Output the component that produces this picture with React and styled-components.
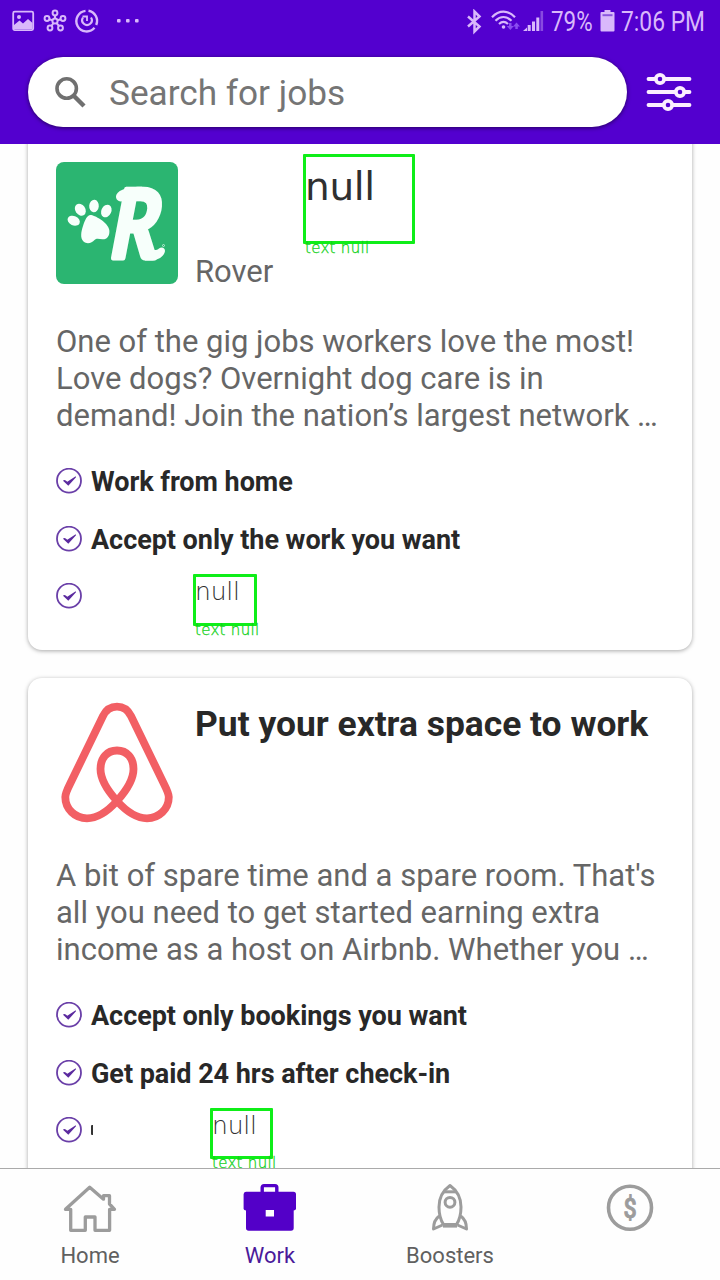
import React from 'react';
import styled, { createGlobalStyle } from 'styled-components';

const GlobalStyle = createGlobalStyle`
  * { box-sizing: border-box; }
  body { margin: 0; background: #fff; font-family: Roboto, sans-serif; }
`;

const Screen = styled.div`
  width: 720px;
  height: 1280px;
  display: flex;
  flex-direction: column;
  overflow: hidden;
  background: #fefefe;
`;

const Header = styled.header`
  height: 144px;
  flex: none;
  background: #5300cf;
`;

const StatusBar = styled.div`
  height: 44px;
  padding: 0 15px 0 12px;
  display: flex;
  align-items: center;
  justify-content: space-between;
  color: #d9b8fb;
`;

const StatusGroup = styled.div`
  display: flex;
  align-items: center;
  svg { display: block; }
`;

const StatusText = styled.span`
  width: ${(p) => p.$width}px;
  margin-left: ${(p) => p.$gap}px;
  font-size: 27px;
  line-height: 44px;
  white-space: nowrap;
  span {
    display: inline-block;
    transform: scaleX(${(p) => p.$squeeze});
    transform-origin: left;
  }
`;

const BatteryIcon = styled.svg`
  margin-left: 8px;
`;

const SearchRow = styled.div`
  padding: 13px 28px 0;
  display: flex;
  align-items: center;
  justify-content: space-between;
`;

const SearchBox = styled.div`
  width: 599px;
  height: 70px;
  border-radius: 35px;
  background: #fff;
  box-shadow: 0 1px 4px rgba(0, 0, 0, 0.55);
  display: flex;
  align-items: center;
  gap: 22px;
  padding: 2px 26px 0;
  color: #757575;
  font-size: 35.2px;
`;

const Feed = styled.main`
  flex: 1;
  min-height: 0;
  overflow: hidden;
  padding: 0 28px;
  display: flex;
  flex-direction: column;
  gap: 28px;
`;

const Card = styled.article`
  position: relative;
  flex: none;
  height: ${(p) => p.$height}px;
  margin-top: ${(p) => p.$offset || 0}px;
  padding: ${(p) => p.$top}px 28px 0;
  border-radius: 14px;
  background: #fff;
  box-shadow: 0 1px 4px rgba(0, 0, 0, 0.34);
`;

const CardHead = styled.div`
  display: flex;
  gap: 17px;
  height: 124px;
  svg { flex: none; display: block; }
`;

const Company = styled.div`
  align-self: flex-end;
  font-size: 31px;
  line-height: 36px;
  color: #666;
  margin-bottom: -4px;
`;

const Title = styled.h2`
  margin: 4px 0 0;
  font-size: 35.4px;
  line-height: 41px;
  font-weight: 700;
  color: #282828;
  white-space: nowrap;
`;

const Description = styled.p`
  margin: ${(p) => p.$top}px 0 0;
  font-size: 31px;
  line-height: 37px;
  color: #666;
  white-space: nowrap;
`;

const Perks = styled.ul`
  list-style: none;
  margin: 18px 0 0;
  padding: 0;
`;

const Perk = styled.li`
  height: 57.8px;
  display: flex;
  align-items: center;
  gap: 9px;
  font-size: 27px;
  font-weight: 700;
  color: #282828;
  white-space: nowrap;
  span { padding-top: 2px; letter-spacing: -0.04px; }
`;

const ClippedMark = styled.i`
  width: 1.5px;
  height: 10px;
  border-radius: 1px 0 0 1px;
  background: #333;
`;

const Marker = styled.div`
  position: absolute;
  left: ${(p) => p.$x}px;
  top: ${(p) => p.$y}px;
  width: ${(p) => p.$w}px;
  height: ${(p) => p.$h}px;
  border: 3px solid #0fee18;
  border-radius: 1px;
  font-family: 'DejaVu Sans', sans-serif;
  white-space: nowrap;
`;

const MarkerValue = styled.span`
  position: absolute;
  left: -1px;
  top: ${(p) => (p.$large ? 6 : 1)}px;
  font-size: ${(p) => (p.$large ? 39 : 25)}px;
  line-height: ${(p) => (p.$large ? 48 : 28)}px;
  font-weight: ${(p) => (p.$large ? 400 : 200)};
  letter-spacing: ${(p) => (p.$large ? -0.3 : -0.2)}px;
  color: #303030;
`;

const MarkerLabel = styled.span`
  position: absolute;
  left: -1px;
  top: 100%;
  margin-top: -3px;
  font-size: 15px;
  line-height: 20px;
  font-weight: 200;
  letter-spacing: 0.3px;
  color: #10d018;
  -webkit-text-stroke: 0.3px #10d018;
`;

const NavBar = styled.nav`
  flex: none;
  height: 112px;
  border-top: 1px solid #aaa;
  background: #fefefe;
  display: grid;
  grid-template-columns: repeat(4, 1fr);
`;

const NavItem = styled.div`
  display: flex;
  flex-direction: column;
  align-items: center;
  padding-top: 13px;
  gap: 8px;
  font-size: 22px;
  line-height: 28px;
  color: ${(p) => (p.$active ? '#4a1a9a' : '#606060')};
  svg { display: block; }
`;

const LeftStatus = () => (
  <svg width="130" height="26" viewBox="0 0 130 26" fill="none" stroke="currentColor">
    <rect x="1.2" y="2.7" width="20" height="18.4" rx="1.5" strokeWidth="1.8" />
    <path d="M2 20V16L7.5 11.500L11 14.500L16 10L20.500 14V20Z" fill="currentColor" stroke="none" />
    <circle cx="7" cy="8" r="2" fill="currentColor" stroke="none" />
    <g strokeWidth="2">
      <circle cx="43" cy="12" r="2.6" />
      <circle cx="43" cy="4" r="2.4" />
      <circle cx="35" cy="9.5" r="2.4" />
      <circle cx="51" cy="9.5" r="2.4" />
      <circle cx="38" cy="19" r="2.4" />
      <circle cx="48.5" cy="19" r="2.4" />
      <path d="M43 6.500V9.500M37.200 10.300L40.500 11.300M48.800 10.300L45.500 11.300M39.400 17L41.400 14.200M47 17L44.600 14.200" />
    </g>
    <path d="M73.500 1.900A10.300 10.300 0 1 0 82.500 18.800M76.500 1.700A10.300 10.300 0 0 1 84.200 16" strokeWidth="2.400" />
    <path d="M71 8.500A4.800 4.800 0 1 0 79 8.500" strokeWidth="2.200" />
    <path d="M70.500 7.500H75V12" strokeWidth="1.800" />
    <g fill="currentColor" stroke="none">
      <rect x="105" y="10" width="3.6" height="3.6" rx="1" />
      <rect x="114" y="10" width="3.6" height="3.6" rx="1" />
      <rect x="123" y="10" width="3.6" height="3.6" rx="1" />
    </g>
  </svg>
);

const RightStatus = () => (
  <svg width="80" height="26" viewBox="0 0 80 26" fill="none" stroke="currentColor">
    <path d="M2 7.500L13.500 17.500L8.500 22.500V2.500L13.500 7.500L2 17.500" strokeWidth="2.500" />
    <path d="M26 8.200C33 .8 42 .8 49 8.200M29.500 11.800C34.500 6.700 40.500 6.700 45.500 11.800M33 15C36 12.300 39 12.300 42 15" strokeWidth="2.200" />
    <circle cx="37.5" cy="18" r="1.8" fill="currentColor" stroke="none" />
    <g fill="#8b4df0" stroke="none">
      <path d="M43 14H45.500V17H47.800L44.300 21L40.800 17H43Z" />
      <path d="M49.300 20H51.800V17.500H54L50.500 13.500L47 17.500H49.300Z" />
    </g>
    <g fill="currentColor" stroke="none">
      <path d="M57 22L61 18.500V22Z" />
      <rect x="61.7" y="16" width="3" height="6" />
      <rect x="66" y="12.5" width="3" height="9.5" />
      <rect x="70.3" y="8.5" width="3" height="13.5" />
      <rect x="74.5" y="2" width="2.6" height="20" opacity=".4" />
    </g>
  </svg>
);

const Battery = () => (
  <BatteryIcon width="15" height="26" viewBox="0 0 15 26">
    <path fill="currentColor" d="M4.500 1H10.500V3H13.500Q14.500 3 14.500 4V21.500Q14.500 22.500 13.500 22.500H1.500Q.5 22.500 .5 21.500V4Q.5 3 1.500 3H4.500Z" />
    <path d="M2.500 6.200H12.500" stroke="#8a55de" strokeWidth="2" />
  </BatteryIcon>
);

const SearchIcon = () => (
  <svg width="33" height="34" viewBox="0 0 33 34" fill="none" stroke="#707070">
    <circle cx="12.7" cy="12.5" r="9.7" strokeWidth="3.6" />
    <path d="M19.500 19.500L30 30" strokeWidth="4.400" />
  </svg>
);

const FilterIcon = () => (
  <svg width="46" height="40" viewBox="0 0 46 40" fill="#5300cf" stroke="#fbeeff" strokeWidth="3.8" strokeLinecap="round">
    <path d="M2.500 7H43.500M2.500 20H43.500M2.500 33H43.500" />
    <circle cx="14" cy="7" r="4.2" />
    <circle cx="34" cy="20" r="4.2" />
    <circle cx="22" cy="33" r="4.2" />
  </svg>
);

const RoverLogo = () => (
  <svg width="122" height="122" viewBox="0 0 122 122" fill="#f7fffb">
    <rect width="122" height="122" rx="8" fill="#2bb571" />
    <ellipse cx="17.7" cy="58.7" rx="6.4" ry="4.7" transform="rotate(25 17.700 58.700)" />
    <ellipse cx="24.3" cy="47.7" rx="5" ry="6.4" transform="rotate(-35 24.300 47.700)" />
    <ellipse cx="38" cy="44" rx="4.8" ry="6.2" transform="rotate(5 38 44)" />
    <ellipse cx="50.3" cy="49" rx="5" ry="6.6" transform="rotate(25 50.300 49)" />
    <path d="M34.500 53C38 53 52 60 53.300 68C54 74 51 77.500 46.500 77.300C43 77 40.500 76 38.500 78C36 81 31 82.500 27.500 79.500C24 76 25 70 27 64C29 58 31 53 34.500 53Z" />
    <text transform="translate(54 96) skewX(-5) scale(.84 1)" fontFamily="Lato" fontWeight="700" fontStyle="italic" fontSize="95" stroke="#f7fffb" strokeWidth="5" strokeLinejoin="round">R</text>
    <path d="M76 36C71 35 69 39 65 39.500C61 39 59 36 60.500 32.500C63 27 74 24.700 86 24.700V31Z" />
    <path d="M84 78C92 88 99 90 103 86.500C106 84.500 109 86 109 89C108 95 101 98.500 95 98.500H89Z" />
    <circle cx="107.5" cy="83.5" r="1" fill="none" stroke="#d4f5e4" strokeWidth=".8" />
  </svg>
);

const AirbnbLogo = () => (
  <svg width="122" height="124" viewBox="0 0 122 124" fill="none" stroke="#f25f64" strokeWidth="7.8">
    <path d="M61 6.700C54 6.700 50 10 47 16L14 84C10.500 91 9.300 94 9.300 97C9.300 109 19 118.300 31 118.300C42 118.300 52 111 61 101C71 90 77.500 78 77.500 69C77.500 58 71 50.500 61 50.500C51 50.500 44.500 58 44.500 69C44.500 78 51 90 61 101C70 111 80 118.300 91 118.300C103 118.300 112.800 109 112.800 97C112.800 94 111.500 91 108 84L75 16C72 10 68 6.700 61 6.700Z" />
  </svg>
);

const CheckIcon = () => (
  <svg width="26" height="26" viewBox="0 0 26 26">
    <circle cx="13" cy="12.7" r="12" fill="none" stroke="#6a3fa8" strokeWidth="1.8" />
    <path d="M7 12.800Q8.500 11 11.300 13.800L19.700 8.300L20 9.200L12.300 17.800Z" fill="#5b2a9f" />
  </svg>
);

const HomeIcon = () => (
  <svg width="56" height="52" viewBox="0 0 56 52" fill="none" stroke="#9c9c9c" strokeWidth="3.3" strokeLinejoin="round">
    <path d="M27.700 5.200L3.500 27.300H8.700V48.300H23.300V35H33V48.300H47.600V27.300H52.500L47.500 22V13.700H41.500V17.200Z" />
  </svg>
);

const WorkIcon = () => (
  <svg width="60" height="52" viewBox="0 0 60 52">
    <path d="M22.200 10V5.500Q22.200 3.600 24 3.600H35Q36.800 3.600 36.800 5.500V10" fill="none" stroke="#5300c8" strokeWidth="3.4" />
    <path fillRule="evenodd" fill="#5300c8" d="M6 9.800H53.500Q56 9.800 56 12.300V27Q55.500 28.200 53.700 28.500V46Q53.700 48.700 51 48.700H8.700Q6 48.700 6 46V28.500Q4 28.200 3.600 27V12.300Q3.600 9.800 6 9.800ZM25.700 28V34.500H34V28Z" />
  </svg>
);

const BoostersIcon = () => (
  <svg width="56" height="52" viewBox="0 0 56 52" fill="none" stroke="#9c9c9c" strokeWidth="3" strokeLinejoin="round">
    <path d="M28 3.500C21 8.500 17 16 17 25C17 32 18.500 38 21.500 42.500H34.500C37.500 38 39 32 39 25C39 16 35 8.500 28 3.500Z" />
    <path d="M22 9.800H34" />
    <circle cx="28" cy="20.3" r="4.9" />
    <path d="M21 43.300H35" strokeWidth="4.6" />
    <path d="M17.300 34C13 37 11.500 42 11.500 47L20.500 43M38.700 34C43 37 44.500 42 44.500 47L35.500 43" />
  </svg>
);

const EarningsIcon = () => (
  <svg width="52" height="52" viewBox="0 0 52 52">
    <circle cx="26" cy="25.8" r="21.5" fill="none" stroke="#9c9c9c" strokeWidth="3.6" />
    <text transform="translate(26 35.500) scale(.86 1)" textAnchor="middle" fontFamily="Roboto" fontWeight="500" fontSize="27" fill="#9c9c9c" stroke="#9c9c9c" strokeWidth=".9" strokeLinejoin="round">$</text>
  </svg>
);

function NullMarker({ large, x, y, w, h }) {
  return (
    <Marker $x={x} $y={y} $w={w} $h={h}>
      <MarkerValue $large={large}>null</MarkerValue>
      <MarkerLabel>text null</MarkerLabel>
    </Marker>
  );
}

export default function App() {
  return (
    <Screen>
      <GlobalStyle />
      <Header>
        <StatusBar>
          <StatusGroup><LeftStatus /></StatusGroup>
          <StatusGroup>
            <RightStatus />
            <StatusText $width={41} $gap={5} $squeeze={0.83}><span>79%</span></StatusText>
            <Battery />
            <StatusText $width={84} $gap={6} $squeeze={0.845}><span>7:06 PM</span></StatusText>
          </StatusGroup>
        </StatusBar>
        <SearchRow>
          <SearchBox><SearchIcon />Search for jobs</SearchBox>
          <FilterIcon />
        </SearchRow>
      </Header>
      <Feed>
        <Card $offset={-20} $height={526} $top={38}>
          <CardHead><RoverLogo /><Company>Rover</Company></CardHead>
          <Description $top={37}>
            One of the gig jobs workers love the most!<br />
            Love dogs? Overnight dog care is in<br />
            demand! Join the nation’s largest network …
          </Description>
          <Perks>
            <Perk><CheckIcon /><span>Work from home</span></Perk>
            <Perk><CheckIcon /><span>Accept only the work you want</span></Perk>
            <Perk><CheckIcon /></Perk>
          </Perks>
          <NullMarker large x={275} y={30} w={112} h={90} />
          <NullMarker x={165} y={450} w={64} h={52} />
        </Card>
        <Card $height={526} $top={22}>
          <CardHead><AirbnbLogo /><Title>Put your extra space to work</Title></CardHead>
          <Description $top={33}>
            A bit of spare time and a spare room. That's<br />
            all you need to get started earning extra<br />
            income as a host on Airbnb. Whether you …
          </Description>
          <Perks>
            <Perk><CheckIcon /><span>Accept only bookings you want</span></Perk>
            <Perk><CheckIcon /><span>Get paid 24 hrs after check-in</span></Perk>
            <Perk><CheckIcon /><ClippedMark /></Perk>
          </Perks>
          <NullMarker x={182} y={430} w={63} h={51} />
        </Card>
      </Feed>
      <NavBar>
        <NavItem><HomeIcon />Home</NavItem>
        <NavItem $active><WorkIcon />Work</NavItem>
        <NavItem><BoostersIcon />Boosters</NavItem>
        <NavItem><EarningsIcon /></NavItem>
      </NavBar>
    </Screen>
  );
}
